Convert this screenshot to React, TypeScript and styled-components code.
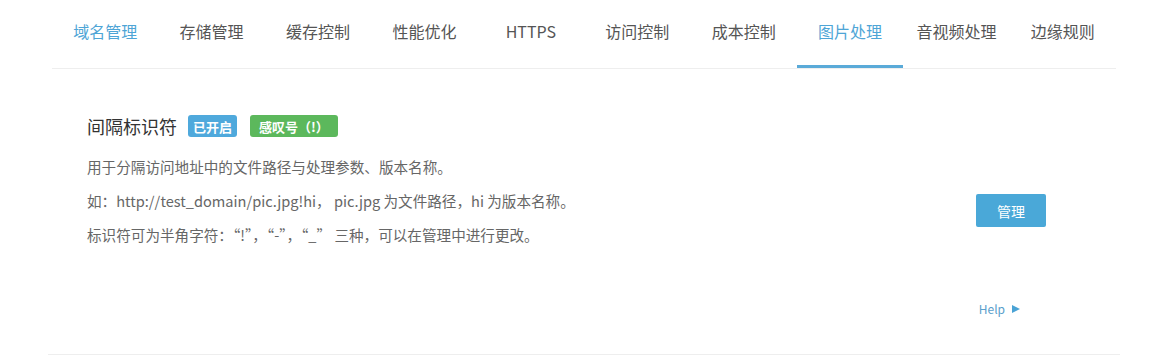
import React from "react";
import styled, { createGlobalStyle } from "styled-components";

const Global = createGlobalStyle`
  html, body { margin: 0; padding: 0; background: #fff; }
  body { font-family: "Noto Sans CJK SC", "Noto Sans", sans-serif; }
`;

const Page = styled.div`
  width: 1154px;
  box-sizing: border-box;
  padding: 0 34px 0 48px;
`;

const TabBar = styled.nav`
  display: flex;
  margin: 0 4px;
  border-bottom: 1px solid #eeeeee;
`;

const Tab = styled.div<{ $active?: boolean; $current?: boolean }>`
  flex: 1;
  height: 68px;
  box-sizing: border-box;
  display: flex;
  align-items: center;
  justify-content: center;
  padding-bottom: 3px;
  font-size: 16px;
  color: ${(p) => (p.$active || p.$current ? "#4ea5d6" : "#555")};
  border-bottom: 3px solid ${(p) => (p.$active ? "#5aaad8" : "transparent")};
  white-space: nowrap;
`;

const Section = styled.section`
  padding: 46px 74px 37px 39px;
  border-bottom: 1px solid #eeeeee;
`;

const Row = styled.div`
  display: flex;
  align-items: flex-start;
`;

const Info = styled.div`
  flex: 1;
`;

const TitleRow = styled.div`
  display: flex;
  align-items: center;
  height: 22px;
`;

const Title = styled.h3`
  margin: 0 11px 0 0;
  font-size: 18px;
  font-weight: 400;
  color: #333;
`;

const Badge = styled.span<{ $color: string; $pad: number }>`
  display: inline-flex;
  align-items: center;
  height: 22px;
  padding: 0 ${(p) => p.$pad}px;
  margin-right: 13px;
  border-radius: 3px;
  background: ${(p) => p.$color};
  color: #fff;
  font-size: 13px;
  font-weight: 700;
`;

const Desc = styled.div`
  margin-top: 13px;
`;

const Line = styled.p`
  margin: 0;
  font-size: 14.6px;
  line-height: 34px;
  color: #666;
`;

const Button = styled.button`
  margin-top: 79px;
  width: 70px;
  height: 33px;
  border: none;
  border-radius: 2px;
  background: #4aa8d8;
  color: #fff;
  font-family: inherit;
  font-size: 14px;
  cursor: pointer;
`;

const Footer = styled.div`
  display: flex;
  justify-content: flex-end;
  margin-top: 49px;
  padding-right: 26px;
`;

const Help = styled.a`
  display: inline-flex;
  align-items: center;
  gap: 7px;
  font-size: 12px;
  line-height: 16px;
  color: #5aa0cc;
  text-decoration: none;
`;

const Arrow = styled.span`
  width: 0;
  height: 0;
  border-top: 4px solid transparent;
  border-bottom: 4px solid transparent;
  border-left: 8px solid #4aa3d5;
`;

const tabs = ["域名管理", "存储管理", "缓存控制", "性能优化", "HTTPS", "访问控制", "成本控制", "图片处理", "音视频处理", "边缘规则"];

export default function App() {
  return (
    <Page>
      <Global />
      <TabBar>
        {tabs.map((t, i) => (
          <Tab key={t} $active={i === 7} $current={i === 0}>
            {t}
          </Tab>
        ))}
      </TabBar>
      <Section>
        <Row>
          <Info>
            <TitleRow>
              <Title>间隔标识符</Title>
              <Badge $color="#4fa9dc" $pad={5}>已开启</Badge>
              <Badge $color="#5cb85c" $pad={9}>感叹号（!）</Badge>
            </TitleRow>
            <Desc>
              <Line>用于分隔访问地址中的文件路径与处理参数、版本名称。</Line>
              <Line>如：http://test_domain/pic.jpg!hi， pic.jpg 为文件路径，hi 为版本名称。</Line>
              <Line>标识符可为半角字符：“!”，“-”，“_” 三种，可以在管理中进行更改。</Line>
            </Desc>
          </Info>
          <Button>管理</Button>
        </Row>
        <Footer>
          <Help href="#">
            Help <Arrow />
          </Help>
        </Footer>
      </Section>
    </Page>
  );
}
